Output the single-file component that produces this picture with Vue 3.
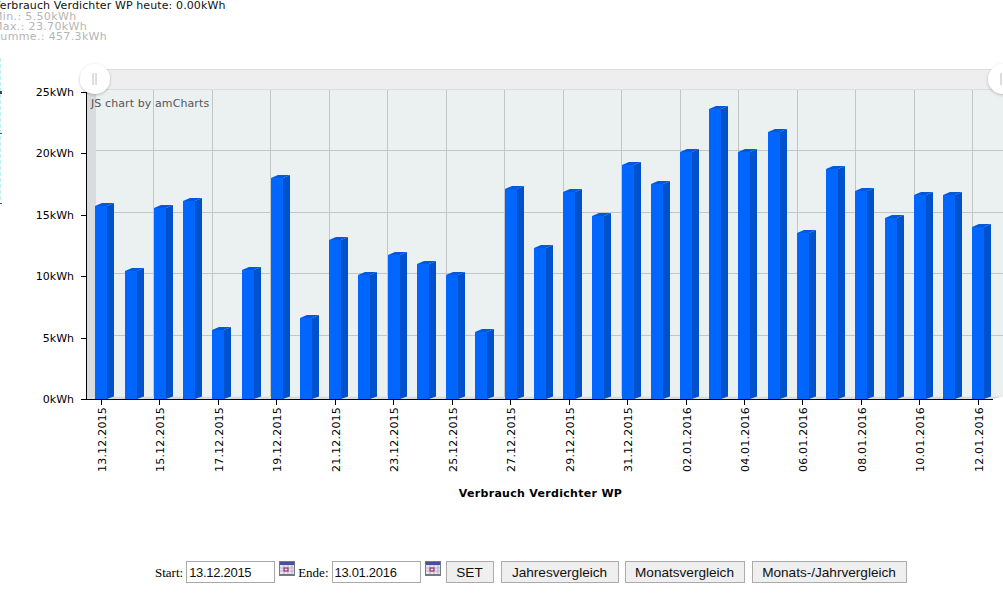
<template>
  <div class="page">
    <div class="stats">
      <div class="today">Verbrauch Verdichter WP heute: {{ today }}kWh</div>
      <div class="sub first">Min.: 5.50kWh</div>
      <div class="sub">Max.: 23.70kWh</div>
      <div class="sub">Summe.: 457.3kWh</div>
    </div>

    <svg class="chart" width="1003" height="458" viewBox="0 42 1003 458">
      <defs>
        <filter id="gripShadow" x="-30%" y="-30%" width="160%" height="160%">
          <feDropShadow dx="0" dy="1" stdDeviation="1.6" flood-color="#000" flood-opacity="0.25" />
        </filter>
      </defs>

      <line x1="0.5" y1="58" x2="0.5" y2="200" stroke="#b8f4f4" stroke-width="1.2" stroke-dasharray="4 2" />
      <rect x="0" y="91" width="2" height="3" fill="#444" />
      <rect x="0" y="133" width="2" height="1" fill="#555" />
      <rect x="0" y="203" width="2" height="1" fill="#444" />

      <!-- 3d plot walls -->
      <rect x="96" y="89.5" width="907" height="307" fill="#ebf0f0" />
      <polygon points="86.5,92 96,89.5 96,396.5 86.5,399" fill="#d8dcdc" />
      <polygon points="86.5,399 96,396.5 1003,396.5 993,399" fill="#d8dcdc" />

      <g stroke="#c4c6c6" stroke-width="1">
        <line v-for="y in gridY" :key="'h' + y" x1="96" :y1="y" x2="1003" :y2="y" />
        <line v-for="x in gridX" :key="'v' + x" :x1="x" y1="89.5" :x2="x" y2="396.5" />
      </g>

      <!-- bars -->
      <g v-for="b in bars" :key="b.x">
        <polygon :points="b.side" fill="#0052cc" />
        <polygon :points="b.cap" fill="#0059dd" />
        <rect class="front" :x="b.x" :y="b.top + 3" width="12" :height="399 - b.top - 3" fill="#0066ff" />
      </g>

      <!-- axes -->
      <line x1="86.5" y1="92" x2="86.5" y2="399.5" stroke="#000" />
      <line x1="86" y1="399.5" x2="993" y2="399.5" stroke="#000" />

      <g v-for="t in yTicks" :key="t.label">
        <line x1="81" :y1="t.y" x2="86" :y2="t.y" stroke="#000" />
        <text class="axis" x="74" :y="t.y + 3" text-anchor="end">{{ t.label }}</text>
      </g>

      <g v-for="t in xTicks" :key="t.label">
        <line :x1="t.x" y1="399.5" :x2="t.x" y2="405" stroke="#000" />
        <text class="axis date-label" :transform="`translate(${t.x + 4} 472) rotate(-90)`">{{ t.label }}</text>
      </g>

      <text class="credit" x="91" y="107">JS chart by amCharts</text>

      <!-- scrollbar with grips -->
      <rect x="96" y="69.5" width="907" height="20" fill="#eeeeee" stroke="#dddddd" />
      <g v-for="x in [95, 1003]" :key="x">
        <circle :cx="x" cy="79" r="15" fill="#fff" filter="url(#gripShadow)" />
        <line :x1="x - 2" y1="73" :x2="x - 2" y2="85" stroke="#bbb" />
        <line :x1="x + 1" y1="73" :x2="x + 1" y2="85" stroke="#bbb" />
      </g>

      <text class="title" x="540.5" y="497" text-anchor="middle">Verbrauch Verdichter WP</text>
    </svg>

    <div class="controls">
      <label class="field">Start:</label>
      <input class="date" value="13.12.2015" />
      <svg class="cal" width="16" height="15" viewBox="0 0 16 15">
        <rect x="0" y="0" width="16" height="15" fill="#77777f" />
        <rect x="1" y="1" width="14" height="3" fill="#4a4f9c" />
        <rect x="1" y="4" width="14" height="9" fill="#e6e6ee" />
        <path d="M1 7h14M1 10h14M5 4v9M9 4v9M13 4v9" stroke="#b4b4c8" stroke-width="1" fill="none" />
        <rect x="5" y="7" width="4" height="3" fill="none" stroke="#a01860" />
      </svg>
      <label class="field end">Ende:</label>
      <input class="date" value="13.01.2016" />
      <svg class="cal" width="16" height="15" viewBox="0 0 16 15">
        <rect x="0" y="0" width="16" height="15" fill="#77777f" />
        <rect x="1" y="1" width="14" height="3" fill="#4a4f9c" />
        <rect x="1" y="4" width="14" height="9" fill="#e6e6ee" />
        <path d="M1 7h14M1 10h14M5 4v9M9 4v9M13 4v9" stroke="#b4b4c8" stroke-width="1" fill="none" />
        <rect x="5" y="7" width="4" height="3" fill="none" stroke="#a01860" />
      </svg>
      <button class="btn set">SET</button>
      <button class="btn year">Jahresvergleich</button>
      <button class="btn month">Monatsvergleich</button>
      <button class="btn both">Monats-/Jahrvergleich</button>
    </div>
  </div>
</template>

<script setup>
import { computed, ref } from 'vue'

const today = ref('0.00')

const values = [
  15.8, 10.5, 15.6, 16.2, 5.7, 10.6, 18.1, 6.7, 13.0, 10.2, 11.8, 11.1, 10.2, 5.5, 17.2, 12.4,
  16.9, 15.0, 19.1, 17.6, 20.2, 23.7, 20.2, 21.8, 13.6, 18.8, 17.0, 14.8, 16.7, 16.7, 14.1
]
const scale = 12.28

const bars = computed(() =>
  values.map((v, i) => {
    const x = Math.round(95.4 + i * 29.23)
    const top = Math.round(397 - v * scale)
    return {
      x,
      top,
      side: `${x + 12},${top + 3} ${x + 19},${top} ${x + 19},396.5 ${x + 12},399`,
      cap: `${x},${top + 3} ${x + 7},${top} ${x + 19},${top} ${x + 12},${top + 3}`
    }
  })
)

const gridY = [89.5, 150.5, 212.5, 273.5, 335.5]
const gridX = Array.from({ length: 15 }, (_, i) => Math.round(153 + i * 58.5) + 0.5)

const yTicks = [25, 20, 15, 10, 5, 0].map((v, i) => ({
  label: v + 'kWh',
  y: Math.round(92 + i * 61.4) + 0.5
}))

const xLabels = [
  '13.12.2015', '15.12.2015', '17.12.2015', '19.12.2015', '21.12.2015', '23.12.2015',
  '25.12.2015', '27.12.2015', '29.12.2015', '31.12.2015', '02.01.2016', '04.01.2016',
  '06.01.2016', '08.01.2016', '10.01.2016', '12.01.2016'
]
const xTicks = xLabels.map((label, i) => ({
  label,
  x: Math.round(101 + i * 58.45) + 0.5
}))
</script>

<style scoped>
.page {
  width: 1003px;
  height: 599px;
  overflow: hidden;
  position: relative;
}

.stats {
  height: 42px;
  margin-left: -7px;
  font-family: "DejaVu Sans", Verdana, sans-serif;
  font-size: 11px;
  line-height: 10px;
  white-space: nowrap;
}

.today {
  color: #111;
  line-height: 11px;
  letter-spacing: 0.11px;
}

.sub {
  color: #b5b5b5;
  letter-spacing: 0.35px;
}

.sub.first {
  margin-top: 1px;
}

.chart {
  display: block;
}

.axis {
  font-family: "DejaVu Sans", Verdana, sans-serif;
  font-size: 11px;
  fill: #000;
}

.date-label {
  letter-spacing: 0.2px;
}

.front {
  shape-rendering: crispEdges;
}

.credit {
  font-family: "DejaVu Sans", Verdana, sans-serif;
  font-size: 11px;
  letter-spacing: 0.1px;
  fill: #555;
}

.title {
  font-family: "DejaVu Sans", Verdana, sans-serif;
  font-size: 11px;
  font-weight: bold;
  letter-spacing: 0.3px;
  fill: #000;
}

.controls {
  display: flex;
  align-items: flex-start;
  margin-top: 61px;
  padding-left: 155px;
}

.field {
  font-family: "Liberation Serif", "Times New Roman", serif;
  font-size: 13px;
  line-height: 22px;
  color: #000;
  margin-right: 3px;
  padding-top: 1px;
}

.field.end {
  margin-right: 3px;
}

.date {
  box-sizing: border-box;
  width: 89px;
  height: 22px;
  padding: 0 2px;
  border: 1px solid #a9a9a9;
  background: #fff;
  font-family: "Liberation Sans", Arial, sans-serif;
  font-size: 13px;
  letter-spacing: -0.3px;
  color: #111;
  outline: none;
}

.cal {
  margin: 0 3px 0 4px;
}

.btn {
  box-sizing: border-box;
  height: 22px;
  padding: 0;
  border: 1px solid #ababab;
  border-radius: 0;
  background: #efefef;
  font-family: "Liberation Sans", Arial, sans-serif;
  font-size: 13.6px;
  color: #111;
}

.set {
  width: 48px;
  margin-left: 2px;
}

.year {
  width: 118px;
  margin-left: 7px;
}

.month {
  width: 120px;
  margin-left: 6px;
}

.both {
  width: 155px;
  margin-left: 7px;
}
</style>

<style>
html,
body {
  margin: 0;
  overflow: hidden;
  background: #fff;
}
</style>
